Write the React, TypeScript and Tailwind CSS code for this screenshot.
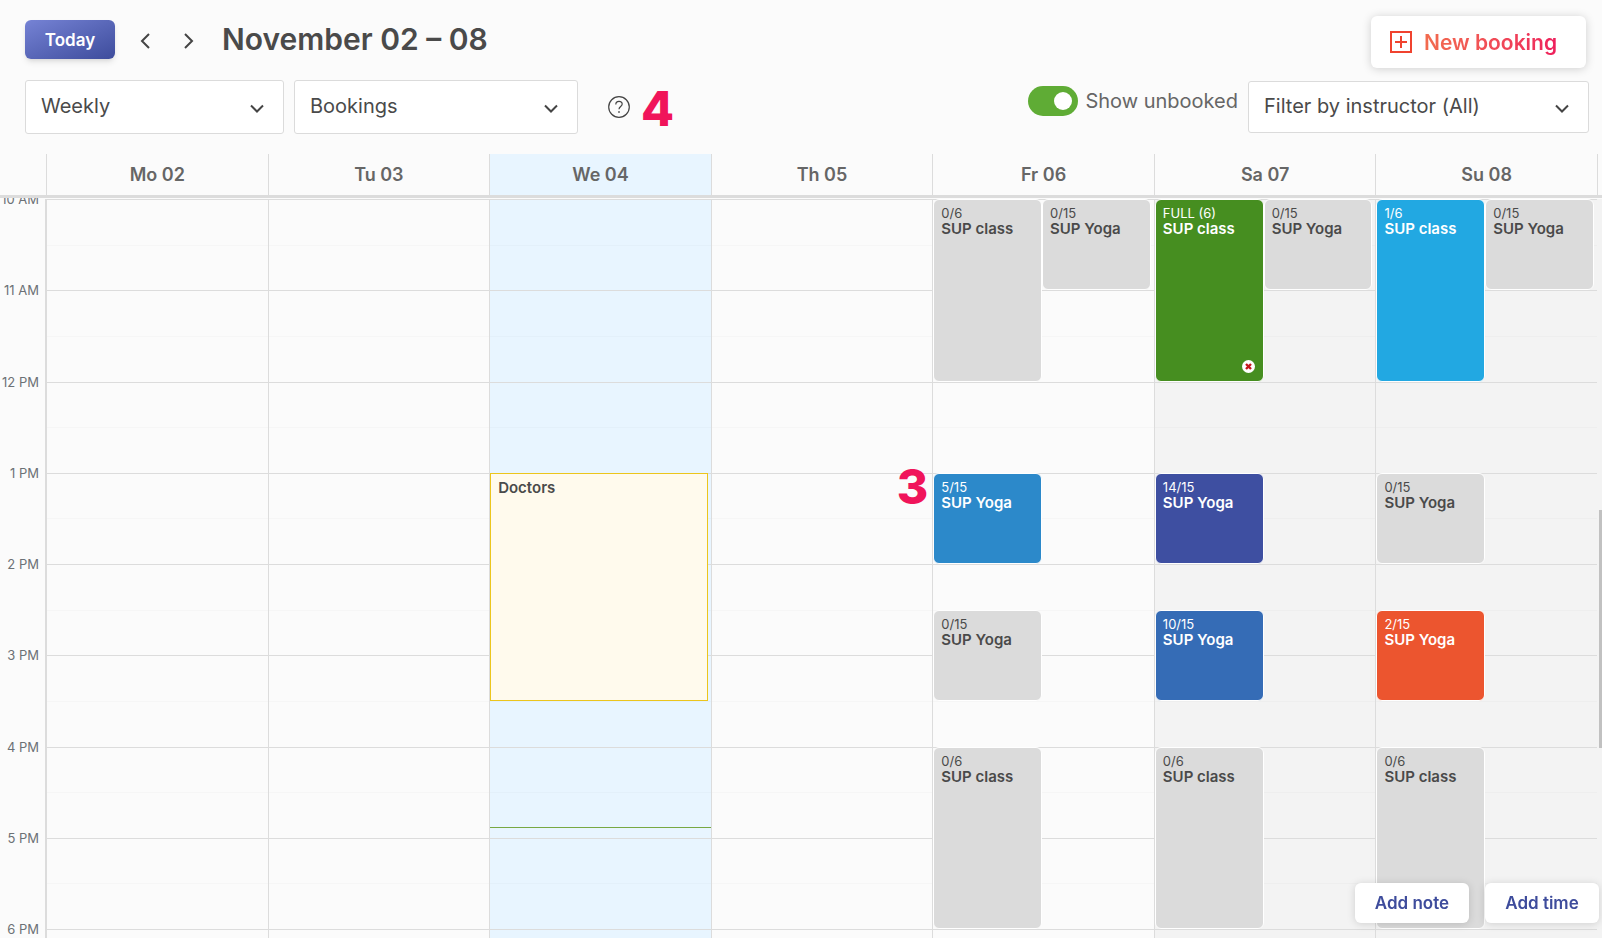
import { useState } from 'react';
import clsx from 'clsx';

const days = [
  { label: 'Mo 02' },
  { label: 'Tu 03' },
  { label: 'We 04', today: true },
  { label: 'Th 05' },
  { label: 'Fr 06' },
  { label: 'Sa 07', weekend: true },
  { label: 'Su 08', weekend: true },
];

const hours = ['10 AM', '11 AM', '12 PM', '1 PM', '2 PM', '3 PM', '4 PM', '5 PM', '6 PM'];

// Times are in half hour slots counted from 10 AM
const SLOTS = 16;

const colors = {
  empty: 'bg-[#dbdbdb] text-[#4a4a4a]',
  green: 'bg-[#468e20] text-white',
  sky: 'bg-[#22a8e2] text-white',
  blue: 'bg-[#2c89ca] text-white',
  indigo: 'bg-[#3e4fa1] text-white',
  royal: 'bg-[#356cb6] text-white',
  orange: 'bg-[#ec552f] text-white',
};

type Booking = {
  day: number;
  slot: number;
  span: number;
  lane: 1 | 2;
  count: string;
  title: string;
  color: keyof typeof colors;
  closed?: boolean;
};

const bookings: Booking[] = [
  { day: 4, slot: 0, span: 4, lane: 1, count: '0/6', title: 'SUP class', color: 'empty' },
  { day: 4, slot: 0, span: 2, lane: 2, count: '0/15', title: 'SUP Yoga', color: 'empty' },
  { day: 4, slot: 6, span: 2, lane: 1, count: '5/15', title: 'SUP Yoga', color: 'blue' },
  { day: 4, slot: 9, span: 2, lane: 1, count: '0/15', title: 'SUP Yoga', color: 'empty' },
  { day: 4, slot: 12, span: 4, lane: 1, count: '0/6', title: 'SUP class', color: 'empty' },
  { day: 5, slot: 0, span: 4, lane: 1, count: 'FULL (6)', title: 'SUP class', color: 'green', closed: true },
  { day: 5, slot: 0, span: 2, lane: 2, count: '0/15', title: 'SUP Yoga', color: 'empty' },
  { day: 5, slot: 6, span: 2, lane: 1, count: '14/15', title: 'SUP Yoga', color: 'indigo' },
  { day: 5, slot: 9, span: 2, lane: 1, count: '10/15', title: 'SUP Yoga', color: 'royal' },
  { day: 5, slot: 12, span: 4, lane: 1, count: '0/6', title: 'SUP class', color: 'empty' },
  { day: 6, slot: 0, span: 4, lane: 1, count: '1/6', title: 'SUP class', color: 'sky' },
  { day: 6, slot: 0, span: 2, lane: 2, count: '0/15', title: 'SUP Yoga', color: 'empty' },
  { day: 6, slot: 6, span: 2, lane: 1, count: '0/15', title: 'SUP Yoga', color: 'empty' },
  { day: 6, slot: 9, span: 2, lane: 1, count: '2/15', title: 'SUP Yoga', color: 'orange' },
  { day: 6, slot: 12, span: 4, lane: 1, count: '0/6', title: 'SUP class', color: 'empty' },
];

function SelectBox({ label, options, className }: { label: string; options: string[]; className: string }) {
  return (
    <div className={clsx('grid items-center rounded-[3px] border border-[#dbdbdb] bg-white', className)}>
      <select
        aria-label={label}
        className="col-start-1 row-start-1 h-full w-full appearance-none bg-transparent pl-[15px] pr-10 pb-0.5 text-xl text-[#4a4a4a] outline-none"
      >
        {options.map((option) => (
          <option key={option}>{option}</option>
        ))}
      </select>
      <svg
        className="pointer-events-none col-start-1 row-start-1 mt-0.5 mr-[19px] justify-self-end"
        width="14"
        height="9"
        viewBox="0 0 14 9"
        fill="none"
        stroke="#444"
        strokeWidth="2"
      >
        <path d="M1 1.5l6 6 6-6" />
      </svg>
    </div>
  );
}

function Arrow({ direction }: { direction: 'prev' | 'next' }) {
  return (
    <button aria-label={direction} className="flex h-6 w-6 items-center justify-center">
      <svg width="10" height="16" viewBox="0 0 10 16" fill="none" stroke="#444" strokeWidth="2">
        <path d={direction === 'prev' ? 'M9 1L2 8l7 7' : 'M1 1l7 7-7 7'} />
      </svg>
    </button>
  );
}

function BookingCard({ booking }: { booking: Booking }) {
  return (
    <button
      className={clsx(
        'relative flex flex-col items-start justify-start rounded-md border border-white px-[7px] pt-1.5 text-left leading-[15px]',
        colors[booking.color]
      )}
      style={{ gridRow: `${booking.slot + 1} / span ${booking.span}`, gridColumn: booking.lane }}
    >
      <span className="text-[13px] leading-[15px]">{booking.count}</span>
      <span className="text-[15px] leading-[15px] font-semibold whitespace-nowrap">{booking.title}</span>
      {booking.closed && (
        <svg className="absolute right-2 bottom-2" width="13" height="13" viewBox="0 0 13 13">
          <circle cx="6.500" cy="6.500" r="6.500" fill="#fff" />
          <path d="M4 4l5 5M9 4l-5 5" stroke="#c4161c" strokeWidth="2.400" />
        </svg>
      )}
    </button>
  );
}

export default function App() {
  const [showUnbooked, setShowUnbooked] = useState(true);

  return (
    <div className="flex min-h-screen flex-col bg-[#fbfbfb] font-['Inter',sans-serif] text-[#4a4a4a]">
      {/* Toolbar */}
      <header className="flex flex-col gap-3 pt-4 pb-5 pl-[25px] pr-[13px]">
        <div className="flex items-start justify-between pr-[3px]">
          <div className="flex items-center pt-1">
            <button className="h-[39px] w-[90px] rounded-md bg-linear-to-br from-[#7683d5] to-[#3e4c9c] pt-0.5 text-[17px] font-semibold text-white shadow-md">
              Today
            </button>
            <div className="ml-[18px] flex gap-5 pt-0.5">
              <Arrow direction="prev" />
              <Arrow direction="next" />
            </div>
            <h1 className="ml-[21px] pb-0.5 text-[30px] leading-9 font-semibold">November 02 – 08</h1>
          </div>
          <button className="flex h-[52px] w-[215px] items-center gap-3 rounded-md bg-white pl-[19px] shadow-[0_1px_10px_rgba(0,0,0,0.18)]">
            <svg width="22" height="22" viewBox="0 0 22 22" fill="none" stroke="#f0432f" strokeWidth="2">
              <path d="M1 1h20v20H1zM11 5v12M5 11h12" />
            </svg>
            <span className="bg-linear-to-r from-[#f26b4e] to-[#ee1e5c] bg-clip-text pt-0.5 text-[21px] font-semibold text-transparent">
              New booking
            </span>
          </button>
        </div>

        <div className="flex items-start justify-between">
          <div className="flex items-center">
            <SelectBox label="Calendar range" options={['Weekly', 'Daily', 'Monthly']} className="h-[54px] w-[259px]" />
            <SelectBox label="Calendar content" options={['Bookings', 'Instructors']} className="ml-[10px] h-[54px] w-[284px]" />
            <button aria-label="Help" className="ml-[30px]">
              <svg width="22" height="22" viewBox="0 0 22 22" fill="none" stroke="#444" strokeWidth="1.200">
                <circle cx="11" cy="11" r="10.300" />
                <path d="M7.800 8.400c0-4 6.400-4 6.400-.4 0 2.400-3.200 2.600-3.200 5.200" />
                <path d="M11 15.200v1.600" strokeWidth="1.600" />
              </svg>
            </button>
            <span className="ml-[11px] pt-1 text-5xl leading-[50px] font-extrabold text-[#f0145a]">4</span>
          </div>
          <div className="flex items-start gap-[10px]">
            <label className="flex items-center gap-[7px] pt-[6px] text-xl leading-[30px] text-[#666]">
              <input
                type="checkbox"
                checked={showUnbooked}
                onChange={(e) => setShowUnbooked(e.target.checked)}
                className="h-[30px] w-[50px] appearance-none rounded-full bg-[#aaa] p-[6px] before:block before:size-[18px] before:rounded-full before:bg-white checked:bg-[#5fac35] checked:before:ml-5"
              />
              Show unbooked
            </label>
            <SelectBox label="Instructor" options={['Filter by instructor (All)']} className="mt-px h-[52px] w-[341px]" />
          </div>
        </div>
      </header>

      {/* Day names */}
      <div className="flex h-11 border-b-[3px] border-[#dcdcdc]">
        <div className="w-[46px] shrink-0" />
        <div className="grid flex-1 grid-cols-7">
          {days.map((day) => (
            <div
              key={day.label}
              className={clsx(
                'border-l border-[#dcdcdc] pt-px text-center text-lg leading-10 font-semibold text-[#666]',
                day.today && 'bg-[#e8f5ff]'
              )}
            >
              {day.label}
            </div>
          ))}
        </div>
        <div className="w-[5px] shrink-0 border-l border-[#dcdcdc]" />
      </div>

      {/* Time grid */}
      <main className="flex flex-1 overflow-hidden pt-px">
        <div className="w-[46px] shrink-0 border-r border-[#dcdcdc] pr-[6px]">
          <div className="grid h-[730px] grid-rows-[repeat(8,1fr)_0px]">
            {hours.map((hour) => (
              <div key={hour} className="h-0 text-right">
                <span className="block -translate-y-1/2 text-[13px] leading-4 whitespace-nowrap text-[#6c7176]">{hour}</span>
              </div>
            ))}
          </div>
        </div>

        <div className="grid flex-1 grid-cols-7">
          {days.map((day, dayIndex) => (
            <div
              key={day.label}
              className={clsx(
                'border-l border-[#dcdcdc]',
                day.today && 'bg-[#e8f5ff]',
                day.weekend && 'bg-[#f3f3f3]'
              )}
            >
              <div className="grid h-[730px] grid-cols-[1fr_1fr_3px] grid-rows-[repeat(16,1fr)]">
                {Array.from({ length: SLOTS }, (_, slot) => (
                  <div
                    key={slot}
                    className={clsx('col-span-3 col-start-1 border-t', slot % 2 ? 'border-black/2' : 'border-[#dcdcdc]')}
                    style={{ gridRowStart: slot + 1 }}
                  />
                ))}
                {bookings
                  .filter((booking) => booking.day === dayIndex && (showUnbooked || !booking.count.startsWith('0/')))
                  .map((booking) => (
                    <BookingCard key={`${booking.slot}-${booking.lane}`} booking={booking} />
                  ))}
                {day.today && (
                  <>
                    <div className="col-span-2 col-start-1 row-span-5 row-start-7 border border-[#ecc51c] bg-[#fffaed] px-[7px] pt-1.5 text-[15px] leading-[15px] font-semibold">
                      Doctors
                    </div>
                    {/* Current time */}
                    <div className="col-span-3 col-start-1 row-start-14 mt-[35px] h-px bg-[#78a843]" />
                  </>
                )}
                {dayIndex === 3 && (
                  <span className="col-span-3 col-start-1 row-start-7 self-start justify-self-end pr-1 text-5xl leading-7 font-extrabold text-[#f0145a]">
                    3
                  </span>
                )}
              </div>
              <div className="h-[9px] border-t border-[#dcdcdc]" />
            </div>
          ))}
        </div>

        {/* Scrollbar */}
        <div className="flex w-[5px] shrink-0 justify-end bg-[#f3f3f3]">
          <div className="mt-[311px] h-[238px] w-[3px] bg-[#c1c1c1]" />
        </div>
      </main>

      <div className="fixed right-[3px] bottom-[15px] flex gap-4">
        {['Add note', 'Add time'].map((label) => (
          <button
            key={label}
            className="h-10 w-[114px] rounded-md bg-white pt-0.5 text-[17px] font-semibold text-[#3e4c9c] shadow-[0_1px_8px_rgba(0,0,0,0.15)]"
          >
            {label}
          </button>
        ))}
      </div>
    </div>
  );
}
